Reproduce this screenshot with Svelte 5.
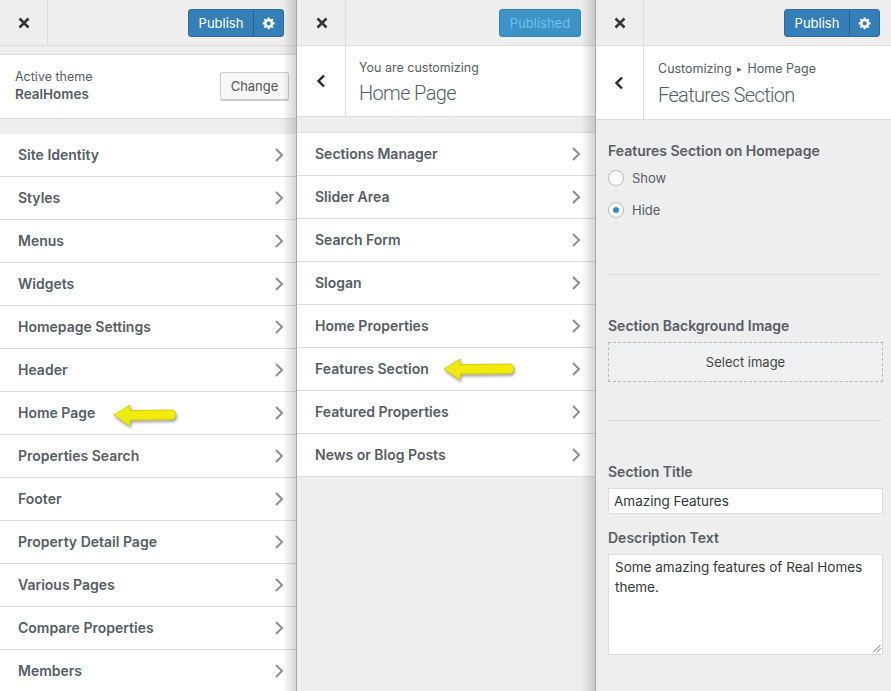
<script>
  const themeItems = ['Site Identity', 'Styles', 'Menus', 'Widgets', 'Homepage Settings', 'Header', 'Home Page', 'Properties Search', 'Footer', 'Property Detail Page', 'Various Pages', 'Compare Properties', 'Members'];
  const pageItems = ['Sections Manager', 'Slider Area', 'Search Form', 'Slogan', 'Home Properties', 'Features Section', 'Featured Properties', 'News or Blog Posts'];
  // yellow pointers drawn over the two rows, tail is the x where the arrow ends
  const arrowOn = { 'Home Page': { cls: 'a1', tail: 62 }, 'Features Section': { cls: 'a2', tail: 70 } };
</script>

{#snippet closeIcon()}
  <div class="close">
    <svg width="12" height="12" viewBox="0 0 12 12"><path d="M1.5 1.5 10.500 10.500M10.500 1.500 1.500 10.500" stroke="#32373c" stroke-width="2.600" fill="none"/></svg>
  </div>
{/snippet}

{#snippet gear()}
  <svg width="14" height="14" viewBox="0 0 20 20"><path fill="#fff" d="M18 12h-2.180c-.17.7-.44 1.350-.81 1.930l1.540 1.540-2.100 2.100-1.540-1.540c-.58.360-1.230.640-1.910.810V19H8v-2.180c-.68-.170-1.330-.450-1.910-.810l-1.540 1.540-2.100-2.100 1.540-1.540c-.37-.58-.64-1.230-.81-1.930H1V9h2.180c.17-.7.440-1.350.81-1.930L2.450 5.530l2.100-2.100 1.540 1.540c.58-.360 1.230-.640 1.910-.810V2h3v2.160c.68.170 1.330.450 1.910.810l1.540-1.540 2.100 2.100-1.540 1.540c.37.580.64 1.230.81 1.930H18v3zm-8.500 1.500c1.660 0 3-1.340 3-3s-1.340-3-3-3-3 1.340-3 3 1.340 3 3 3z"/></svg>
{/snippet}

{#snippet publish()}
  <div class="publish">
    <span class="pub-main">Publish</span>
    <span class="pub-gear">{@render gear()}</span>
  </div>
{/snippet}

{#snippet backIcon()}
  <div class="back">
    <svg width="12" height="16" viewBox="0 0 12 16"><path d="M8 2.500 2.500 8 8 13.500" stroke="#23282d" stroke-width="2.400" fill="none"/></svg>
  </div>
{/snippet}

{#snippet menu(items)}
  <ul class="menu">
    {#each items as item}
      <li>
        <span class="label">{item}</span>
        {#if arrowOn[item]}
          {@const arrow = arrowOn[item]}
          <svg class="pointer {arrow.cls}" width="76" height="32" viewBox="0 0 76 32">
            <defs>
              <filter id="sh-{arrow.cls}" x="-20%" y="-30%" width="140%" height="170%"><feDropShadow dx="1" dy="2" stdDeviation="1.500" flood-color="#000" flood-opacity=".4"/></filter>
            </defs>
            <path filter="url(#sh-{arrow.cls})" d="M2 13 18 3v5.500l{arrow.tail - 20} -.5c2.500 0 3.500 2 3.500 4.700S{arrow.tail + 1} 17 {arrow.tail - 2} 17.500L18 18v6z" fill="#f1eb0a" stroke="#c9c400" stroke-width=".8"/>
          </svg>
        {/if}
        <svg class="chev" width="9" height="14" viewBox="0 0 9 14"><path d="M1 1l6 6-6 6" stroke="#8a9096" stroke-width="2" fill="none"/></svg>
      </li>
    {/each}
  </ul>
{/snippet}

<div class="page">
  <section class="panel first">
    <header class="bar">
      {@render closeIcon()}
      {@render publish()}
    </header>
    <div class="theme">
      <div class="theme-text">
        <div class="theme-label">Active theme</div>
        <div class="theme-name">RealHomes</div>
      </div>
      <span class="change">Change</span>
    </div>
    {@render menu(themeItems)}
  </section>

  <section class="panel second">
    <header class="bar">
      {@render closeIcon()}
      <div class="published">Published</div>
    </header>
    <div class="title-row">
      {@render backIcon()}
      <div class="title-text">
        <div class="crumb">You are customizing</div>
        <div class="title">Home Page</div>
      </div>
    </div>
    {@render menu(pageItems)}
  </section>

  <section class="panel third">
    <header class="bar">
      {@render closeIcon()}
      {@render publish()}
    </header>
    <div class="title-row tall">
      {@render backIcon()}
      <div class="title-text">
        <div class="crumb">Customizing <small>▸</small> Home Page</div>
        <div class="title">Features Section</div>
      </div>
    </div>
    <div class="controls">
      <div class="group radios">
        <h4>Features Section on Homepage</h4>
        <label><span class="radio"></span>Show</label>
        <label><span class="radio on"></span>Hide</label>
      </div>
      <div class="group image-group">
        <h4>Section Background Image</h4>
        <div class="select-image">Select image</div>
      </div>
      <div class="group text-group">
        <h4>Section Title</h4>
        <div class="input">Amazing Features</div>
        <h4 class="desc">Description Text</h4>
        <div class="textarea">
          Some amazing features of Real Homes theme.
          <svg class="grip" width="9" height="9" viewBox="0 0 9 9"><path d="M1 8.500 8.500 1M4.500 8.500l4-4" stroke="#555" stroke-width=".8"/></svg>
        </div>
      </div>
    </div>
  </section>
</div>

<style>
  :global(body) {
    background: #eee;
  }

  .page {
    display: flex;
    width: 891px;
    height: 691px;
    overflow: hidden;
    font-family: Inter, "Liberation Sans", sans-serif;
    color: #555d66;
  }

  .panel {
    position: relative;
    background: #eee;
    height: 691px;
    box-sizing: border-box;
    flex: none;
  }

  .panel.first {
    width: 297px;
    border-right: 1px solid #a9a9a9;
  }

  .panel.second {
    width: 299px;
    border-right: 1px solid #a9a9a9;
  }

  .panel.third {
    width: 295px;
  }

  .panel.first::after,
  .panel.second::after {
    content: '';
    position: absolute;
    top: 0;
    right: 0;
    bottom: 0;
    width: 14px;
    background: linear-gradient(to right, rgba(0, 0, 0, 0), rgba(0, 0, 0, 0.16));
    pointer-events: none;
  }

  .bar {
    display: flex;
    justify-content: space-between;
    align-items: center;
    height: 46px;
    box-sizing: border-box;
    border-bottom: 1px solid #ddd;
    background: #eee;
    padding-right: 12px;
  }

  .second .bar {
    padding-right: 14px;
  }

  .first .bar,
  .third .bar {
    padding-left: 1px;
  }

  .third .bar {
    padding-right: 11px;
  }

  .close {
    width: 47px;
    height: 45px;
    box-sizing: border-box;
    border-right: 1px solid #ddd;
    display: flex;
    align-items: center;
    justify-content: center;
  }

  .second .close {
    width: 49px;
    padding-left: 1px;
  }

  .publish {
    display: flex;
    height: 28px;
    font-size: 13px;
    color: #fff;
    border-radius: 3px;
    overflow: hidden;
    background: #3582c4;
    border: 1px solid #2c6ea3;
    box-sizing: border-box;
  }

  .pub-main {
    width: 64px;
    display: flex;
    align-items: center;
    justify-content: center;
    background: #357fb8;
    border-right: 1px solid #23608f;
  }

  .pub-gear {
    width: 29px;
    display: flex;
    align-items: center;
    justify-content: center;
    background: #357fb8;
  }

  .published {
    width: 82px;
    height: 28px;
    box-sizing: border-box;
    background: #3e93c6;
    border: 1px solid #2f86b9;
    border-radius: 3px;
    color: #66c6e4;
    font-size: 13px;
    display: flex;
    align-items: center;
    justify-content: center;
  }

  .theme {
    margin-top: 8px;
    height: 65px;
    box-sizing: border-box;
    background: #fff;
    border-top: 1px solid #ddd;
    border-bottom: 1px solid #ddd;
    display: flex;
    align-items: center;
    justify-content: space-between;
    padding: 0 7px 0 15px;
  }

  .theme-text {
    margin-top: -2px;
  }

  .theme-label {
    font-size: 12.500px;
    line-height: 17px;
    color: #555d66;
  }

  .theme-name {
    font-size: 13.500px;
    font-weight: 600;
    line-height: 18px;
    color: #555d66;
  }

  .change {
    width: 69px;
    height: 29px;
    box-sizing: border-box;
    display: flex;
    align-items: center;
    justify-content: center;
    font-size: 13px;
    color: #555;
    background: #f7f7f7;
    border: 1px solid #ccc;
    border-bottom-width: 2px;
    border-radius: 3px;
  }

  .title-row {
    display: flex;
    height: 71px;
    box-sizing: border-box;
    background: #fff;
    border-bottom: 1px solid #ddd;
  }

  .title-row.tall {
    height: 74px;
  }

  .back {
    width: 47px;
    flex: none;
    box-sizing: border-box;
    border-right: 1px solid #ddd;
    display: flex;
    align-items: center;
    justify-content: center;
  }

  .second .back {
    width: 49px;
    padding-left: 1px;
  }

  .third .back {
    width: 48px;
  }

  .title-text {
    padding: 14px 0 0 14px;
  }

  .second .title-text {
    padding-left: 13px;
  }

  .third .title-text {
    padding-top: 15px;
  }

  .crumb {
    font-size: 12.500px;
    line-height: 16px;
    color: #555d66;
  }

  .crumb small {
    font-size: 9px;
    vertical-align: 1px;
    margin: 0 2px;
  }

  .title {
    font-family: Roboto, Inter, sans-serif;
    font-size: 20px;
    font-weight: 300;
    line-height: 26px;
    letter-spacing: -0.65px;
    margin-top: 4px;
    color: #555d66;
  }

  .third .title {
    margin-top: 5px;
  }

  .menu {
    list-style: none;
    margin: 15px 0 0;
    padding: 0;
  }

  .second .menu {
    border-top: 1px solid #ddd;
  }

  .menu li {
    position: relative;
    height: 43px;
    box-sizing: border-box;
    display: flex;
    align-items: center;
    justify-content: space-between;
    background: #fff;
    border-bottom: 1px solid #ddd;
    padding: 0 12px 0 18px;
    font-size: 14px;
    font-weight: 600;
    color: #555d66;
  }

  .second .menu li {
    padding: 0 14px 0 18px;
  }

  .label {
    margin-top: -2px;
  }

  .pointer {
    position: absolute;
  }

  .pointer.a1 {
    left: 112px;
    top: 10px;
  }

  .pointer.a2 {
    left: 145px;
    top: 8px;
  }

  .controls {
    padding: 0 8px 0 12px;
  }

  .group {
    border-bottom: 1px solid #ddd;
  }

  .group:last-child {
    border-bottom: 0;
  }

  h4 {
    margin: 0;
    font-size: 14px;
    font-weight: 600;
    line-height: 18px;
    color: #555d66;
  }

  .radios {
    padding-top: 22px;
    height: 155px;
    box-sizing: border-box;
  }

  .radios label {
    display: flex;
    align-items: center;
    gap: 8px;
    font-size: 13px;
    color: #555d66;
    height: 20px;
    margin-top: 12px;
  }

  .radios h4 + label {
    margin-top: 8px;
  }

  .radio {
    width: 16px;
    height: 16px;
    box-sizing: border-box;
    border: 1px solid #b4b9be;
    border-radius: 50%;
    background: #fff;
    display: flex;
    align-items: center;
    justify-content: center;
  }

  .radio.on::before {
    content: '';
    width: 6px;
    height: 6px;
    border-radius: 50%;
    background: #2f8fc9;
  }

  .image-group {
    height: 146px;
    box-sizing: border-box;
    padding-top: 42px;
  }

  .select-image {
    margin-top: 7px;
    height: 40px;
    box-sizing: border-box;
    border: 1px dashed #b4b9be;
    background: #eef0f2;
    display: flex;
    align-items: center;
    justify-content: center;
    font-size: 13px;
    color: #444;
  }

  .text-group {
    padding-top: 42px;
  }

  .input {
    margin-top: 7px;
    height: 26px;
    box-sizing: border-box;
    background: #fff;
    border: 1px solid #ddd;
    display: flex;
    align-items: center;
    padding: 0 5px;
    font-size: 13.500px;
    color: #32373c;
  }

  .desc {
    margin-top: 15px;
  }

  .textarea {
    position: relative;
    margin-top: 7px;
    height: 101px;
    box-sizing: border-box;
    background: #fff;
    border: 1px solid #ddd;
    padding: 2px 6px;
    font-size: 13.500px;
    line-height: 20px;
    color: #32373c;
  }

  .grip {
    position: absolute;
    right: 1px;
    bottom: 1px;
  }
</style>
